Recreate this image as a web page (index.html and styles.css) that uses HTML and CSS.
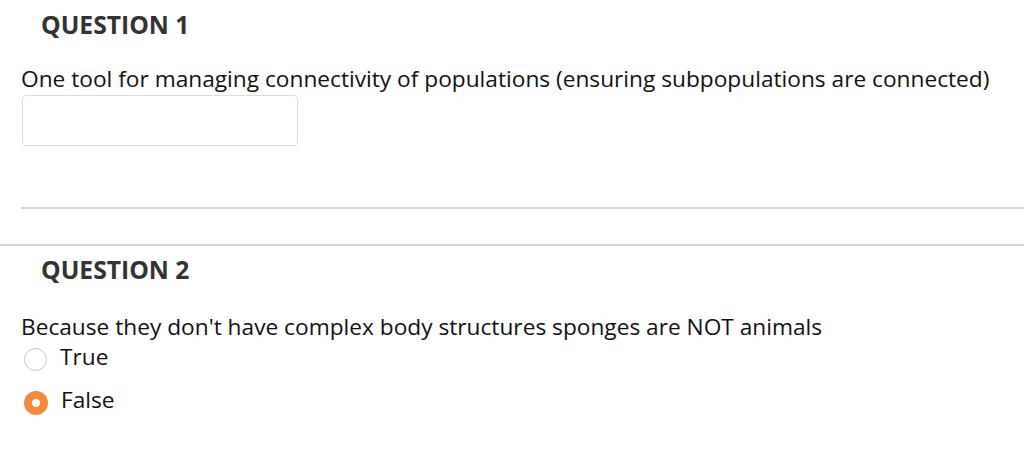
FILE: index.html
```html
<!DOCTYPE html>
<html lang="en">
<head>
  <meta charset="UTF-8" />
  <meta name="viewport" content="width=device-width, initial-scale=1" />
  <title>Quiz</title>
  <link rel="stylesheet" href="styles.css">
</head>
<body>
  <!-- Question 1: fill in the blank -->
  <div class="question first">
    <h2 class="qtitle">QUESTION 1</h2>
    <p class="qtext">One tool for managing connectivity of populations (ensuring subpopulations are connected)</p>
    <input type="text" class="answer" />
    <hr class="inner-rule" />
  </div>

  <hr class="outer-rule" />

  <!-- Question 2: true / false -->
  <div class="question second">
    <h2 class="qtitle">QUESTION 2</h2>
    <p class="qtext">Because they don't have complex body structures sponges are NOT animals</p>
    <label class="choice">
      <span class="radio"></span>
      <span>True</span>
    </label>
    <label class="choice">
      <span class="radio checked"></span>
      <span>False</span>
    </label>
  </div>
</body>
</html>
```

FILE: styles.css
```css
body {
  font-family: "Open Sans", Arial, sans-serif;
  background-color: #fff;
  color: #111;
  margin: 0;
  padding: 0;
}
.question {
  padding-left: 21px;
}
.first {
  padding-top: 8px;
}
.qtitle {
  margin: 0 0 0 20px;
  font-size: 24.7px;
  line-height: 34px;
  font-weight: bold;
  color: #333;
}
.qtext {
  margin: 0;
  font-size: 22.7px;
  line-height: 30px;
}
.first .qtext {
  margin-top: 22px;
}
.answer {
  display: block;
  width: 276px;
  height: 51px;
  box-sizing: border-box;
  margin: 1px 0 0 1px;
  border: 1px solid #ddd;
  border-radius: 4px;
}
.inner-rule {
  margin: 61px 0 0 0;
  border: 0;
  border-top: 2px solid #d4d4d4;
}
.outer-rule {
  margin: 35px 0 0 0;
  border: 0;
  border-top: 2px solid #d4d4d4;
}
.second .qtitle {
  margin-top: 7px;
}
.second .qtext {
  margin-top: 25px;
}
.choice {
  display: flex;
  align-items: center;
  gap: 13px;
  font-size: 22.7px;
  line-height: 26px;
  margin-left: 3px;
}
.choice + .choice {
  margin-top: 14px;
}
.radio {
  width: 23px;
  height: 23px;
  margin-top: 6px;
  border: 1px solid #c4c4c4;
  border-radius: 50%;
  box-sizing: border-box;
  background: #fff;
}
.radio.checked {
  width: 24px;
  height: 24px;
  border: 8.5px solid #f68a3c;
  background: #fff;
}
```
